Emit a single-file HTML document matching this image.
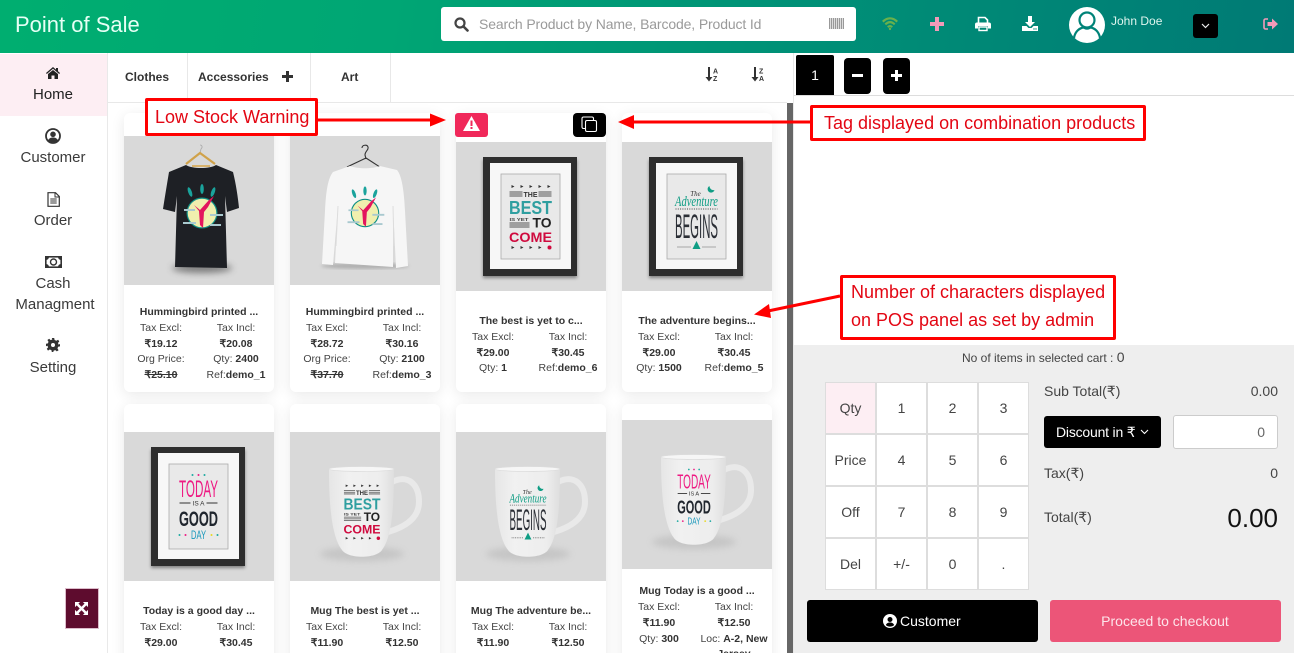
<!DOCTYPE html>
<html>
<head>
<meta charset="utf-8">
<title>Point of Sale</title>
<style>
*{box-sizing:border-box}
html,body{margin:0;padding:0;width:1294px;height:653px;overflow:hidden;background:#fff;font-family:"Liberation Sans",sans-serif;color:#333}
#page{position:relative;width:1294px;height:653px;overflow:hidden;background:#fff}
.a{position:absolute;white-space:nowrap;line-height:20px}
.ctr{transform:translateX(-50%)}
#hd{position:absolute;left:0;top:0;width:1294px;height:53px;background:linear-gradient(100deg,#00ae70 0%,#00a674 30%,#009177 60%,#007a75 100%)}
.side{font-size:15px;color:#3a3a3a;text-align:center}
.card{position:absolute;width:150px;height:279px;background:#fff;border-radius:6px;box-shadow:0 3px 14px rgba(0,0,0,.09);overflow:hidden}
.card svg{position:absolute;left:0;display:block}
.t{position:absolute;left:0;width:150px;text-align:center;font-size:10.5px;font-weight:bold;line-height:16px;color:#333;white-space:nowrap}
.l,.r{position:absolute;font-size:10.5px;line-height:16px;text-align:center;white-space:nowrap;color:#444}
.l{left:0;width:74px}
.r{left:74px;width:76px}
.l b,.r b{color:#333}
.nk{position:absolute;width:51px;height:52px;background:#fff;border:1px solid #ddd;font-size:14px;line-height:50px;text-align:center;color:#444}
.anno{position:absolute;background:#fff;border:3px solid #f00;border-radius:2px;color:#e30613;font-size:18px;white-space:nowrap}
</style>
</head>
<body>
<div id="page">

<svg width="0" height="0" style="position:absolute">
<defs>
<filter id="bl" x="-30%" y="-60%" width="160%" height="220%"><feGaussianBlur stdDeviation="3.5"/></filter>
<filter id="bs" x="-10%" y="-10%" width="120%" height="120%"><feGaussianBlur stdDeviation="1.5"/></filter>
<linearGradient id="mg" x1="0" x2="1" y1="0" y2="0"><stop offset="0" stop-color="#e6e6e6"/><stop offset=".3" stop-color="#f1f1f1"/><stop offset=".8" stop-color="#ededed"/><stop offset="1" stop-color="#dedede"/></linearGradient>
<g id="best">
<g fill="#333"><path d="M-19-32l3 1.500-3 1.500zM-10-32l3 1.500-3 1.500zM-1-32l3 1.500-3 1.500zM8-32l3 1.500-3 1.500zM17-32l3 1.500-3 1.500z"/></g>
<path d="M-21-25h13M-21-23h13M-21-21h13M8-25h13M8-23h13M8-21h13" stroke="#555" stroke-width=".9"/>
<text x="0" y="-20" font-size="7.500" font-weight="bold" text-anchor="middle" fill="#333" textLength="14" lengthAdjust="spacingAndGlyphs">THE</text>
<text x="0" y="-3" font-size="18" font-weight="bold" text-anchor="middle" fill="#2f9fa0" textLength="43" lengthAdjust="spacingAndGlyphs">BEST</text>
<text x="-21" y="4" font-size="4.500" font-weight="bold" fill="#444" textLength="19" lengthAdjust="spacingAndGlyphs">IS YET</text>
<path d="M-21 6h20M-21 8h20M-21 10h20" stroke="#555" stroke-width=".9"/>
<text x="2" y="10.500" font-size="14" font-weight="bold" fill="#222" textLength="19" lengthAdjust="spacingAndGlyphs">TO</text>
<text x="0" y="25" font-size="14" font-weight="bold" text-anchor="middle" fill="#cf0a3e" textLength="43" lengthAdjust="spacingAndGlyphs">COME</text>
<g fill="#333"><path d="M-19 29l3 1.500-3 1.500zM-10 29l3 1.500-3 1.500zM-1 29l3 1.500-3 1.500zM8 29l3 1.500-3 1.500z"/></g>
<circle cx="19" cy="30.500" r="2" fill="#cf0a3e"/>
</g>
<g id="adv">
<text x="-1" y="-21" font-size="7" font-family="Liberation Serif" font-style="italic" text-anchor="middle" fill="#333">The</text>
<path d="M13-31a3.500 3.500 0 1 0 5 4 4 4 0 0 1-5-4z" fill="#0f9d84"/>
<text x="0" y="-11" font-size="15" font-family="Liberation Serif" font-style="italic" text-anchor="middle" fill="#0f9d84" textLength="43" lengthAdjust="spacingAndGlyphs">Adventure</text>
<path d="M-21-8h42" stroke="#444" stroke-width="1" stroke-dasharray="1 1.300"/>
<text x="0" y="21" font-size="34" text-anchor="middle" fill="#2b2f36" textLength="43" lengthAdjust="spacingAndGlyphs">BEGINS</text>
<path d="M0 24l4 8h-8z" fill="#0f9d84"/>
<path d="M-19 30h13M6 30h13" stroke="#666" stroke-width="1" stroke-dasharray="1 1"/>
</g>
<g id="today">
<g fill="#1aa9a0"><circle cx="-6" cy="-32" r="1"/><circle cx="6" cy="-32" r="1"/></g><circle cx="0" cy="-32" r="1" fill="#ee1a83"/>
<text x="0" y="-10" font-size="24" text-anchor="middle" fill="#ee1a83" textLength="39" lengthAdjust="spacingAndGlyphs">TODAY</text>
<path d="M-19-4h11M8-4h11" stroke="#333" stroke-width="1"/>
<text x="0" y="-1.500" font-size="6.500" text-anchor="middle" fill="#333">IS A</text>
<text x="0" y="19" font-size="21" font-weight="bold" text-anchor="middle" fill="#20262e" textLength="39" lengthAdjust="spacingAndGlyphs">GOOD</text>
<text x="0" y="32" font-size="12" text-anchor="middle" fill="#1697bb" textLength="15" lengthAdjust="spacingAndGlyphs">DAY</text>
<circle cx="-19" cy="28" r="1" fill="#1aa9a0"/><circle cx="-13" cy="28" r="1" fill="#ee1a83"/><circle cx="13" cy="28" r="1" fill="#e8d820"/><circle cx="19" cy="28" r="1" fill="#1aa9a0"/>
</g>
<g id="frame">
<rect x="0" y="0" width="150" height="149" fill="#d9d9d9"/>
<rect x="27" y="18" width="94" height="118" fill="#000" opacity=".4" filter="url(#bs)"/>
<rect x="27" y="15" width="94" height="119" fill="#2e2e2e"/>
<rect x="34" y="21" width="81" height="106" fill="#f7f7f7"/>
<rect x="45" y="32" width="59" height="85" fill="#e9e9e9" stroke="#aaa" stroke-width=".8"/>
</g>
<g id="mug">
<rect x="0" y="0" width="150" height="149" fill="#d9d9d9"/>
<ellipse cx="72" cy="122" rx="42" ry="7" fill="#999" opacity=".3" filter="url(#bl)"/>
<path d="M102 50C118 42 129 52 129 70C129 86 115 95 98 100" fill="none" stroke="#e9e9e9" stroke-width="6"/>
<path d="M39 37C39 75 42 105 52 118C58 127 86 127 92 118C102 105 104 75 104 37Z" fill="url(#mg)"/>
<ellipse cx="71.500" cy="37" rx="32.500" ry="2.500" fill="#f6f6f6" stroke="#dcdcdc" stroke-width=".7"/>
</g>
<g id="art">
<circle cx="0" cy="0" r="15.500" fill="#0e8f86"/>
<circle cx="0" cy="0" r="14.300" fill="#f0efae"/>
<path d="M-8-8l6 5 9-10 5-4-6 11-4 5-1 16-3-3-1-14z" fill="#e3155e"/>
<path d="M-18-3h11M-19 10h13M8 2h13M8 12h11" stroke="#a9c9cf" stroke-width="2"/>
<ellipse cx="-12" cy="-21" rx="1.800" ry="5" transform="rotate(-20 -12 -21)" fill="#1aa39c"/>
<ellipse cx="0" cy="-24" rx="1.800" ry="5" fill="#1aa39c"/>
<ellipse cx="11" cy="-21" rx="1.800" ry="5" transform="rotate(20 11 -21)" fill="#1aa39c"/>
</g>
</defs>
</svg>

<!-- HEADER -->
<div id="hd">
  <div class="a" style="left:15px;top:13px;font-size:22px;line-height:24px;color:#e6fff5">Point of Sale</div>
  <div style="position:absolute;left:441px;top:7px;width:415px;height:34px;background:#fff;border-radius:3px"></div>
  <svg style="position:absolute;left:454px;top:17px" width="15" height="15" viewBox="0 0 15 15"><circle cx="6" cy="6" r="4.500" fill="none" stroke="#444" stroke-width="2.200"/><path d="M9.500 9.500L13.500 13.500" stroke="#444" stroke-width="2.600" stroke-linecap="round"/></svg>
  <div class="a" style="left:479px;top:14px;font-size:14px;color:#9a9a9a;letter-spacing:-.13px">Search Product by Name, Barcode, Product Id</div>
  <div style="position:absolute;left:829px;top:18px;width:15px;height:11px;background:repeating-linear-gradient(90deg,#999 0,#999 1px,#ddd 1px,#ddd 2px)"></div>
  <svg style="position:absolute;left:881px;top:16px" width="18" height="15" viewBox="0 0 20 16" fill="none" stroke="#6ab04c" stroke-width="2.400"><path d="M2 6c5-5 11-5 16 0M4.800 9c3.500-3.300 7-3.300 10.400 0M7.500 12c1.700-1.500 3.300-1.500 5 0"/><circle cx="10" cy="14" r=".8" fill="#6ab04c" stroke-width="1"/></svg>
  <svg style="position:absolute;left:930px;top:17px" width="14" height="14" viewBox="0 0 14 14"><path d="M5 0h4v5h5v4H9v5H5V9H0V5h5z" fill="#f49ab9"/></svg>
  <svg style="position:absolute;left:975px;top:16px" width="16" height="16" viewBox="0 0 16 16"><path d="M3.500 7V1.500h6.500l2.500 2.500v3" fill="none" stroke="#fff" stroke-width="1.600"/><path d="M2 6.500h12a2 2 0 0 1 2 2v4h-3v-2.500H3V12.500H0v-4a2 2 0 0 1 2-2z" fill="#fff"/><rect x="4" y="11" width="8" height="3.500" fill="none" stroke="#fff" stroke-width="1.400"/></svg>
  <svg style="position:absolute;left:1022px;top:16px" width="16" height="16" viewBox="0 0 16 16"><path d="M6 0h4v6h3l-5 5-5-5h3z" fill="#fff"/><path d="M0 10h4.500l2 2h3l2-2H16v5H0z" fill="#fff"/><circle cx="12" cy="13" r=".7" fill="#00897a"/><circle cx="14" cy="13" r=".7" fill="#00897a"/></svg>
  <svg style="position:absolute;left:1069px;top:7px" width="36" height="36" viewBox="0 0 36 36"><circle cx="18" cy="18" r="18" fill="#fff"/><circle cx="18" cy="13" r="7.500" fill="#fff" stroke="#008378" stroke-width="2.200"/><path d="M5 31c1-7 6-10 9.500-10.500 2.300 1.500 4.700 1.500 7 0C25 21 30 24 31 31" fill="#fff" stroke="#008378" stroke-width="2.200"/></svg>
  <div class="a" style="left:1111px;top:11px;font-size:12px;color:#dff5ef">John Doe</div>
  <div style="position:absolute;left:1193px;top:14px;width:25px;height:24px;background:#000;border-radius:3px"></div>
  <svg style="position:absolute;left:1201px;top:23px" width="9" height="6" viewBox="0 0 9 6"><path d="M1 1l3.500 3.500L8 1" fill="none" stroke="#eee" stroke-width="1.200"/></svg>
  <svg style="position:absolute;left:1263px;top:18px" width="15" height="12" viewBox="0 0 15 12"><path d="M5 1H2.500A1.500 1.500 0 0 0 1 2.500v7A1.500 1.500 0 0 0 2.500 11H5" fill="none" stroke="#f49ab9" stroke-width="1.600"/><path d="M4.500 4H9V0.500L15 6l-6 5.500V8H4.500z" fill="#f49ab9"/></svg>
</div>

<!-- SIDEBAR -->
<div style="position:absolute;left:107px;top:53px;width:1px;height:600px;background:#e9e9e9"></div>
<div style="position:absolute;left:0;top:54px;width:107px;height:62px;background:#fdeef3"></div>
<svg style="position:absolute;left:46px;top:67px" width="14" height="12" viewBox="0 0 14 12"><path d="M7 0L0 6l.8 1L7 1.800 13.200 7l.8-1-2-1.700V1h-2v1.600z" fill="#222"/><path d="M2 7l5-4 5 4v5H8.500V8.500h-3V12H2z" fill="#222"/></svg>
<div class="a side ctr" style="left:53px;top:85px;color:#222">Home</div>
<svg style="position:absolute;left:45px;top:128px" width="16" height="16" viewBox="0 0 16 16"><circle cx="8" cy="8" r="7" fill="none" stroke="#333" stroke-width="1.800"/><circle cx="8" cy="6.300" r="2.800" fill="#333"/><path d="M3 12.500c1-2.500 3-3 5-3s4 .5 5 3c-2.500 2.500-7.500 2.500-10 0z" fill="#333"/></svg>
<div class="a side ctr" style="left:53px;top:148px">Customer</div>
<svg style="position:absolute;left:47px;top:192px" width="13" height="15" viewBox="0 0 13 15"><path d="M1 .7h7.500L12.300 4.500v9.800H1z" fill="none" stroke="#333" stroke-width="1.200"/><path d="M8 1v4h4M3.300 7h6.400M3.300 9h6.400M3.300 11h6.400" fill="none" stroke="#333" stroke-width="1"/></svg>
<div class="a side ctr" style="left:53px;top:211px">Order</div>
<svg style="position:absolute;left:45px;top:256px" width="17" height="12" viewBox="0 0 17 12"><rect x=".8" y=".8" width="15.400" height="10.400" fill="none" stroke="#333" stroke-width="1.600"/><path d="M1 1h3a3 3 0 0 1-3 3zM16 1h-3a3 3 0 0 0 3 3zM1 11h3a3 3 0 0 0-3-3zM16 11h-3a3 3 0 0 1 3-3z" fill="#333"/><circle cx="8.500" cy="6" r="3" fill="none" stroke="#333" stroke-width="1.400"/></svg>
<div class="a side ctr" style="left:53px;top:274px">Cash</div>
<div class="a side ctr" style="left:55px;top:295px">Managment</div>
<svg style="position:absolute;left:46px;top:338px" width="14" height="14" viewBox="0 0 14 14"><path d="M5.800 0h2.400l.4 2 1.800.8 1.700-1.100 1.200 1.800-1.300 1.400.5 1.700L14 6v2.400l-1.900.4-.6 1.700 1.100 1.700-1.800 1.200-1.400-1.300-1.700.5-.4 1.400H5.800l-.4-1.900-1.700-.6L2 12.600.8 10.800l1.300-1.400-.6-1.700L0 8.200V5.800l1.900-.4.600-1.700L1.400 2 3.200.8l1.400 1.300 1.700-.6z" fill="#333"/><circle cx="7" cy="7" r="2" fill="#fff"/></svg>
<div class="a side ctr" style="left:53px;top:358px">Setting</div>
<div style="position:absolute;left:65px;top:588px;width:34px;height:41px;background:#5e0c2e;border:1px solid #dcbccb"></div>
<svg style="position:absolute;left:75px;top:602px" width="13" height="13" viewBox="0 0 14 14" fill="#fff"><path d="M0 0h5.500L3.700 1.800 7 5.100 10.300 1.800 8.500 0H14v5.500l-1.800-1.800L8.900 7l3.300 3.300 1.800-1.800V14H8.500l1.800-1.800L7 8.900l-3.300 3.300L5.500 14H0V8.500l1.800 1.800L5.100 7 1.800 3.700 0 5.500z"/></svg>

<!-- TABS -->
<div style="position:absolute;left:108px;top:102px;width:679px;height:1px;background:#e8e8e8"></div>
<div style="position:absolute;left:187px;top:53px;width:1px;height:49px;background:#e8e8e8"></div>
<div style="position:absolute;left:310px;top:53px;width:1px;height:49px;background:#e8e8e8"></div>
<div style="position:absolute;left:390px;top:53px;width:1px;height:49px;background:#e8e8e8"></div>
<div class="a" style="left:125px;top:67px;font-size:12px;font-weight:bold">Clothes</div>
<div class="a" style="left:198px;top:67px;font-size:12px;font-weight:bold">Accessories</div>
<svg style="position:absolute;left:282px;top:71px" width="11" height="11" viewBox="0 0 11 11"><path d="M4 0h3v4h4v3H7v4H4V7H0V4h4z" fill="#333"/></svg>
<div class="a" style="left:341px;top:67px;font-size:12px;font-weight:bold">Art</div>
<svg style="position:absolute;left:705px;top:67px" width="14" height="15" viewBox="0 0 14 15"><path d="M3 0h2v10h2.500L4 14.500.5 10H3z" fill="#333"/><text x="8" y="6.500" font-size="7" font-weight="bold" fill="#333">A</text><text x="8" y="14" font-size="7" font-weight="bold" fill="#333">Z</text></svg>
<svg style="position:absolute;left:751px;top:67px" width="14" height="15" viewBox="0 0 14 15"><path d="M3 0h2v10h2.500L4 14.500.5 10H3z" fill="#333"/><text x="8" y="6.500" font-size="7" font-weight="bold" fill="#333">Z</text><text x="8" y="14" font-size="7" font-weight="bold" fill="#333">A</text></svg>

<!-- PRODUCT CARDS -->
<div class="card" style="left:124px;top:113px">
  <svg style="top:23px" width="150" height="149" viewBox="0 0 150 149">
    <rect width="150" height="149" fill="#d9d9d9"/>
    <ellipse cx="78" cy="132" rx="30" ry="5" fill="#555" opacity=".7" filter="url(#bl)"/>
    <path d="M76 9c2 0 3 2 1 4l-1 4" fill="none" stroke="#aaa" stroke-width=".8"/>
    <path d="M62 28l14-11 15 11" fill="none" stroke="#d0a24a" stroke-width="2.200"/>
    <path d="M62 29C68 33 86 33 92 29L109 36C112 48 114 62 115 72L103 76L101 60L103 132L51 131L53 60L51 76L39 73C41 60 43 48 45 36Z" fill="#1e2025"/>
    <path d="M68 30h18" stroke="#d89a2c" stroke-width="1.200"/>
    <use href="#art" transform="translate(78 77)"/>
  </svg>
  <div class="t" style="top:191px">Hummingbird printed ...</div>
  <div class="l" style="top:207px">Tax Excl:</div><div class="r" style="top:207px">Tax Incl:</div>
  <div class="l" style="top:223px"><b>₹19.12</b></div><div class="r" style="top:223px"><b>₹20.08</b></div>
  <div class="l" style="top:238px">Org Price:</div><div class="r" style="top:238px">Qty: <b>2400</b></div>
  <div class="l" style="top:254px"><b><s>₹25.10</s></b></div><div class="r" style="top:254px">Ref:<b>demo_1</b></div>
</div>

<div class="card" style="left:290px;top:113px">
  <svg style="top:23px" width="150" height="149" viewBox="0 0 150 149">
    <rect width="150" height="149" fill="#d9d9d9"/>
    <ellipse cx="75" cy="130" rx="44" ry="3" fill="#888" opacity=".5" filter="url(#bs)"/>
    <path d="M72 12c0-3 5-4 6-1 1 3-3 4-3 8l1 4M76 22L57 31M76 22l17 11" fill="none" stroke="#333" stroke-width="1.100"/>
    <path d="M60 30C68 33 82 33 90 30L107 34C112 40 114 55 115 75L118 130L106 132L103 70L103 131L45 127L48 70L43 129L32 128L35 75C36 55 38 42 43 36Z" fill="#f6f6f6"/>
    <path d="M48 70L46 110M103 70L104 110" stroke="#ddd" stroke-width="1"/>
    <use href="#art" transform="translate(75 77) scale(.92)"/>
  </svg>
  <div class="t" style="top:191px">Hummingbird printed ...</div>
  <div class="l" style="top:207px">Tax Excl:</div><div class="r" style="top:207px">Tax Incl:</div>
  <div class="l" style="top:223px"><b>₹28.72</b></div><div class="r" style="top:223px"><b>₹30.16</b></div>
  <div class="l" style="top:238px">Org Price:</div><div class="r" style="top:238px">Qty: <b>2100</b></div>
  <div class="l" style="top:254px"><b><s>₹37.70</s></b></div><div class="r" style="top:254px">Ref:<b>demo_3</b></div>
</div>

<div class="card" style="left:456px;top:113px">
  <svg style="top:29px" width="150" height="149" viewBox="0 0 150 149">
    <use href="#frame"/><use href="#best" transform="translate(74.500 75)"/>
  </svg>
  <div class="t" style="top:200px">The best is yet to c...</div>
  <div class="l" style="top:216px">Tax Excl:</div><div class="r" style="top:216px">Tax Incl:</div>
  <div class="l" style="top:232px"><b>₹29.00</b></div><div class="r" style="top:232px"><b>₹30.45</b></div>
  <div class="l" style="top:247px">Qty: <b>1</b></div><div class="r" style="top:247px">Ref:<b>demo_6</b></div>
</div>

<div class="card" style="left:622px;top:113px">
  <svg style="top:29px" width="150" height="149" viewBox="0 0 150 149">
    <use href="#frame"/><use href="#adv" transform="translate(74.500 75)"/>
  </svg>
  <div class="t" style="top:200px">The adventure begins...</div>
  <div class="l" style="top:216px">Tax Excl:</div><div class="r" style="top:216px">Tax Incl:</div>
  <div class="l" style="top:232px"><b>₹29.00</b></div><div class="r" style="top:232px"><b>₹30.45</b></div>
  <div class="l" style="top:247px">Qty: <b>1500</b></div><div class="r" style="top:247px">Ref:<b>demo_5</b></div>
</div>

<div class="card" style="left:124px;top:404px">
  <svg style="top:28px" width="150" height="149" viewBox="0 0 150 149">
    <use href="#frame"/><use href="#today" transform="translate(74.500 75)"/>
  </svg>
  <div class="t" style="top:199px">Today is a good day ...</div>
  <div class="l" style="top:215px">Tax Excl:</div><div class="r" style="top:215px">Tax Incl:</div>
  <div class="l" style="top:231px"><b>₹29.00</b></div><div class="r" style="top:231px"><b>₹30.45</b></div>
</div>

<div class="card" style="left:290px;top:404px">
  <svg style="top:28px" width="150" height="149" viewBox="0 0 150 149">
    <use href="#mug"/><use href="#best" transform="translate(72 80) scale(.86)"/>
  </svg>
  <div class="t" style="top:199px">Mug The best is yet ...</div>
  <div class="l" style="top:215px">Tax Excl:</div><div class="r" style="top:215px">Tax Incl:</div>
  <div class="l" style="top:231px"><b>₹11.90</b></div><div class="r" style="top:231px"><b>₹12.50</b></div>
</div>

<div class="card" style="left:456px;top:404px">
  <svg style="top:28px" width="150" height="149" viewBox="0 0 150 149">
    <use href="#mug"/><use href="#adv" transform="translate(72 80) scale(.86)"/>
  </svg>
  <div class="t" style="top:199px">Mug The adventure be...</div>
  <div class="l" style="top:215px">Tax Excl:</div><div class="r" style="top:215px">Tax Incl:</div>
  <div class="l" style="top:231px"><b>₹11.90</b></div><div class="r" style="top:231px"><b>₹12.50</b></div>
</div>

<div class="card" style="left:622px;top:404px">
  <svg style="top:16px" width="150" height="149" viewBox="0 0 150 149">
    <use href="#mug"/><use href="#today" transform="translate(72 77) scale(.86)"/>
  </svg>
  <div class="t" style="top:179px">Mug Today is a good ...</div>
  <div class="l" style="top:195px">Tax Excl:</div><div class="r" style="top:195px">Tax Incl:</div>
  <div class="l" style="top:211px"><b>₹11.90</b></div><div class="r" style="top:211px"><b>₹12.50</b></div>
  <div class="l" style="top:227px">Qty: <b>300</b></div><div class="r" style="top:227px">Loc: <b>A-2, New</b></div>
  <div class="r" style="top:242px"><b>Jersey</b></div>
</div>

<!-- TAGS -->
<div style="position:absolute;left:455px;top:113px;width:33px;height:24px;background:#f0285a;border-radius:3px"></div>
<svg style="position:absolute;left:463px;top:116px" width="17" height="15" viewBox="0 0 17 15"><path d="M8.500 0L17 15H0z" fill="#fff"/><rect x="7.500" y="4.500" width="2" height="5.500" fill="#f0285a"/><rect x="7.500" y="11" width="2" height="2" fill="#f0285a"/></svg>
<div style="position:absolute;left:573px;top:113px;width:33px;height:24px;background:#000;border-radius:4px"></div>
<svg style="position:absolute;left:581px;top:116px" width="17" height="17" viewBox="0 0 17 17" fill="none" stroke="#fff" stroke-width="1.100"><path d="M4 12.500H2.500a1.500 1.500 0 0 1-1.500-1.500V2.500A1.500 1.500 0 0 1 2.500 1H11a1.500 1.500 0 0 1 1.500 1.500V4"/><rect x="4.500" y="4.500" width="11" height="11" rx="1.500"/></svg>

<!-- SCROLLBAR -->
<div style="position:absolute;left:787px;top:103px;width:6px;height:550px;background:#666"></div>
<div style="position:absolute;left:793px;top:53px;width:1px;height:600px;background:#e8e8e8"></div>

<!-- RIGHT PANEL -->
<div style="position:absolute;left:794px;top:95px;width:500px;height:1px;background:#ddd"></div>
<div style="position:absolute;left:796px;top:55px;width:38px;height:40px;background:#000;border-radius:2px 2px 0 0;color:#fff;font-size:14px;line-height:40px;text-align:center">1</div>
<div style="position:absolute;left:844px;top:58px;width:27px;height:36px;background:#000;border-radius:4px"></div>
<div style="position:absolute;left:852px;top:74px;width:11px;height:3px;background:#fff"></div>
<div style="position:absolute;left:883px;top:58px;width:27px;height:36px;background:#000;border-radius:4px"></div>
<svg style="position:absolute;left:891px;top:70px" width="11" height="11" viewBox="0 0 11 11"><path d="M4 0h3v4h4v3H7v4H4V7H0V4h4z" fill="#fff"/></svg>

<div style="position:absolute;left:794px;top:345px;width:500px;height:308px;background:#eee"></div>
<div class="a" style="left:962px;top:347px;font-size:12px;color:#444">No of items in selected cart : <span style="font-size:14px">0</span></div>

<div class="nk" style="left:825px;top:382px;background:#fdeef3">Qty</div>
<div class="nk" style="left:876px;top:382px">1</div>
<div class="nk" style="left:927px;top:382px">2</div>
<div class="nk" style="left:978px;top:382px">3</div>
<div class="nk" style="left:825px;top:434px">Price</div>
<div class="nk" style="left:876px;top:434px">4</div>
<div class="nk" style="left:927px;top:434px">5</div>
<div class="nk" style="left:978px;top:434px">6</div>
<div class="nk" style="left:825px;top:486px">Off</div>
<div class="nk" style="left:876px;top:486px">7</div>
<div class="nk" style="left:927px;top:486px">8</div>
<div class="nk" style="left:978px;top:486px">9</div>
<div class="nk" style="left:825px;top:538px">Del</div>
<div class="nk" style="left:876px;top:538px">+/-</div>
<div class="nk" style="left:927px;top:538px">0</div>
<div class="nk" style="left:978px;top:538px">.</div>

<div class="a" style="left:1044px;top:381px;font-size:14px;color:#444">Sub Total(₹)</div>
<div class="a" style="right:16px;top:381px;font-size:14px;color:#444">0.00</div>
<div style="position:absolute;left:1044px;top:416px;width:117px;height:32px;background:#000;border-radius:3px"></div>
<div class="a" style="left:1056px;top:422px;font-size:14px;color:#fff;letter-spacing:-.2px">Discount in ₹</div>
<svg style="position:absolute;left:1140px;top:429px" width="9" height="6" viewBox="0 0 9 6"><path d="M1 1l3.500 3.500L8 1" fill="none" stroke="#fff" stroke-width="1.100"/></svg>
<div style="position:absolute;left:1173px;top:415px;width:105px;height:34px;background:#fff;border:1px solid #ccc;border-radius:3px;font-size:14px;line-height:32px;text-align:right;padding-right:12px;color:#666">0</div>
<div class="a" style="left:1044px;top:463px;font-size:14px;color:#444">Tax(₹)</div>
<div class="a" style="right:16px;top:463px;font-size:14px;color:#444">0</div>
<div class="a" style="left:1044px;top:507px;font-size:14px;color:#444">Total(₹)</div>
<div class="a" style="right:16px;top:508px;font-size:26px;color:#111">0.00</div>

<div style="position:absolute;left:807px;top:600px;width:231px;height:42px;background:#000;border-radius:3px"></div>
<svg style="position:absolute;left:883px;top:614px" width="14" height="14" viewBox="0 0 14 14"><circle cx="7" cy="7" r="7" fill="#fff"/><circle cx="7" cy="5.500" r="2.500" fill="#000"/><path d="M2.800 11c1-2 2.500-2.500 4.200-2.500S10.200 9 11.200 11c-2.300 2.200-6.100 2.200-8.400 0z" fill="#000"/></svg>
<div class="a" style="left:900px;top:611px;font-size:14px;color:#fff">Customer</div>
<div style="position:absolute;left:1050px;top:600px;width:231px;height:42px;background:#ec5578;border-radius:3px"></div>
<div class="a ctr" style="left:1165px;top:611px;font-size:14px;color:#fde4ea">Proceed to checkout</div>

<!-- ANNOTATION ARROWS -->
<svg style="position:absolute;left:0;top:0" width="1294" height="653" viewBox="0 0 1294 653">
  <path d="M318 120H432" stroke="#f00" stroke-width="3"/><path d="M430 113.500L446 120l-16 6.500z" fill="#f00"/>
  <path d="M810 122H632" stroke="#f00" stroke-width="3"/><path d="M634 115L618 122l16 7z" fill="#f00"/>
  <path d="M840 296L768 311" stroke="#f00" stroke-width="3"/><path d="M769 304L754 314.500l17 3.500z" fill="#f00"/>
</svg>
<div class="anno" style="left:145px;top:98px;width:173px;height:38px;line-height:32px;padding-left:7px">Low Stock Warning</div>
<div class="anno" style="left:810px;top:105px;width:336px;height:36px;line-height:30px;padding-left:11px">Tag displayed on combination products</div>
<div class="anno" style="left:840px;top:275px;width:276px;height:65px;line-height:28px;padding:0 0 0 8px">Number of characters displayed<br>on POS panel as set by admin</div>

</div>
</body>
</html>
